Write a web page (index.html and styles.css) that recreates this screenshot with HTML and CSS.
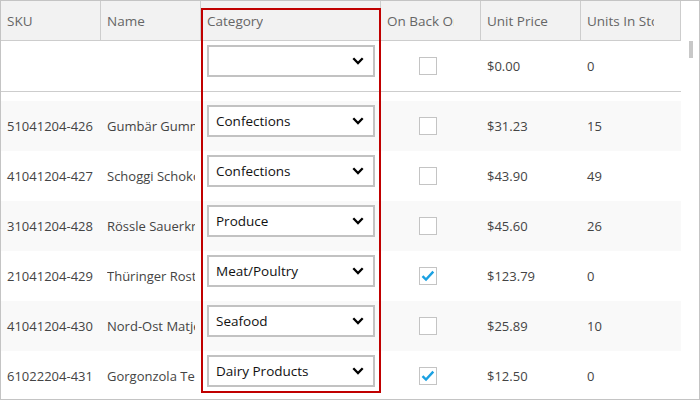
FILE: index.html
```html
<!DOCTYPE html>
<html>
<head>
<meta charset="utf-8">
<link rel="stylesheet" href="styles.css">
</head>
<body>
<div class="grid">
  <div class="table">
    <div class="header">
      <div class="hcell"><span class="label">SKU</span></div>
      <div class="hcell"><span class="label">Name</span></div>
      <div class="hcell"><span class="label">Category</span></div>
      <div class="hcell"><span class="label">On Back Order</span></div>
      <div class="hcell"><span class="label">Unit Price</span></div>
      <div class="hcell"><span class="label">Units In Stock</span></div>
    </div>
    <div class="row filter">
      <div class="cell"></div>
      <div class="cell"></div>
      <div class="cell combo-cell"><div class="combo"><span class="combo-text"></span><svg class="chev" width="12" height="8" viewBox="0 0 12 8"><path d="M1.3 1.3 L6 6 L10.7 1.3" fill="none" stroke="#000" stroke-width="2.3"/></svg></div></div>
      <div class="cell check-cell"><span class="box"></span></div>
      <div class="cell">$0.00</div>
      <div class="cell">0</div>
    </div>
    <div class="spacer"></div>
    <div class="row alt">
      <div class="cell">51041204-426</div>
      <div class="cell"><span class="name">Gumbär Gummibärchen</span></div>
      <div class="cell combo-cell"><div class="combo"><span class="combo-text">Confections</span><svg class="chev" width="12" height="8" viewBox="0 0 12 8"><path d="M1.3 1.3 L6 6 L10.7 1.3" fill="none" stroke="#000" stroke-width="2.3"/></svg></div></div>
      <div class="cell check-cell"><span class="box"></span></div>
      <div class="cell">$31.23</div>
      <div class="cell">15</div>
    </div>
    <div class="row">
      <div class="cell">41041204-427</div>
      <div class="cell"><span class="name">Schoggi Schokolade</span></div>
      <div class="cell combo-cell"><div class="combo"><span class="combo-text">Confections</span><svg class="chev" width="12" height="8" viewBox="0 0 12 8"><path d="M1.3 1.3 L6 6 L10.7 1.3" fill="none" stroke="#000" stroke-width="2.3"/></svg></div></div>
      <div class="cell check-cell"><span class="box"></span></div>
      <div class="cell">$43.90</div>
      <div class="cell">49</div>
    </div>
    <div class="row alt">
      <div class="cell">31041204-428</div>
      <div class="cell"><span class="name">Rössle Sauerkraut</span></div>
      <div class="cell combo-cell"><div class="combo"><span class="combo-text">Produce</span><svg class="chev" width="12" height="8" viewBox="0 0 12 8"><path d="M1.3 1.3 L6 6 L10.7 1.3" fill="none" stroke="#000" stroke-width="2.3"/></svg></div></div>
      <div class="cell check-cell"><span class="box"></span></div>
      <div class="cell">$45.60</div>
      <div class="cell">26</div>
    </div>
    <div class="row">
      <div class="cell">21041204-429</div>
      <div class="cell"><span class="name">Thüringer Rostbratwurst</span></div>
      <div class="cell combo-cell"><div class="combo"><span class="combo-text">Meat/Poultry</span><svg class="chev" width="12" height="8" viewBox="0 0 12 8"><path d="M1.3 1.3 L6 6 L10.7 1.3" fill="none" stroke="#000" stroke-width="2.3"/></svg></div></div>
      <div class="cell check-cell"><span class="box"><svg width="16" height="16" viewBox="0 0 16 16"><path d="M2.5 8.2 L6 11.6 L13.3 3.6" fill="none" stroke="#1ba1e2" stroke-width="2.4"/></svg></span></div>
      <div class="cell">$123.79</div>
      <div class="cell">0</div>
    </div>
    <div class="row alt">
      <div class="cell">41041204-430</div>
      <div class="cell"><span class="name">Nord-Ost Matjeshering</span></div>
      <div class="cell combo-cell"><div class="combo"><span class="combo-text">Seafood</span><svg class="chev" width="12" height="8" viewBox="0 0 12 8"><path d="M1.3 1.3 L6 6 L10.7 1.3" fill="none" stroke="#000" stroke-width="2.3"/></svg></div></div>
      <div class="cell check-cell"><span class="box"></span></div>
      <div class="cell">$25.89</div>
      <div class="cell">10</div>
    </div>
    <div class="row">
      <div class="cell">61022204-431</div>
      <div class="cell"><span class="name">Gorgonzola Telino</span></div>
      <div class="cell combo-cell"><div class="combo"><span class="combo-text">Dairy Products</span><svg class="chev" width="12" height="8" viewBox="0 0 12 8"><path d="M1.3 1.3 L6 6 L10.7 1.3" fill="none" stroke="#000" stroke-width="2.3"/></svg></div></div>
      <div class="cell check-cell"><span class="box"><svg width="16" height="16" viewBox="0 0 16 16"><path d="M2.5 8.2 L6 11.6 L13.3 3.6" fill="none" stroke="#1ba1e2" stroke-width="2.4"/></svg></span></div>
      <div class="cell">$12.50</div>
      <div class="cell">0</div>
    </div>
  </div>
  <div class="scrollbar"><div class="thumb"></div></div>
  <div class="highlight"></div>
</div>
</body>
</html>
```

FILE: styles.css
```css
html, body {
  margin: 0;
  padding: 0;
  background: #fff;
}
body {
  font-family: "Open Sans", "Noto Sans", sans-serif;
  font-size: 13px;
  color: #444;
}
.grid {
  position: relative;
  width: 700px;
  height: 400px;
  box-sizing: border-box;
  border: 1px solid #c4c4c4;
  display: flex;
  overflow: hidden;
}
.table {
  width: 680px;
  flex: none;
}
.header {
  display: grid;
  grid-template-columns: 100px 100px 180px 100px 100px 100px;
  height: 40px;
  box-sizing: border-box;
  background: #f2f2f2;
  border-bottom: 1px solid #cdcdcd;
}
.hcell {
  box-sizing: border-box;
  border-right: 1px solid #cdcdcd;
  padding: 0 6px;
  display: flex;
  align-items: center;
  min-width: 0;
  color: #666;
  font-size: 13.5px;
}
.label {
  display: block;
  max-width: 67px;
  white-space: nowrap;
  overflow: hidden;
}
.hcell:nth-child(3) .label {
  max-width: none;
}
.row {
  display: grid;
  grid-template-columns: 100px 100px 180px 100px 100px 100px;
  height: 50px;
}
.row.filter {
  border-bottom: 1px solid #cdcdcd;
}
.row.alt {
  background: #f9f9f9;
}
.spacer {
  height: 9px;
}
.cell {
  box-sizing: border-box;
  padding: 0 6px;
  display: flex;
  align-items: center;
  white-space: nowrap;
  min-width: 0;
}
.name {
  display: block;
  width: 90px;
  overflow: hidden;
  white-space: nowrap;
}
.combo-cell {
  align-items: flex-start;
  padding-top: 4px;
}
.combo {
  width: 168px;
  height: 32px;
  box-sizing: border-box;
  border: 2px solid #c2c2c2;
  background: #fff;
  display: flex;
  align-items: center;
  padding: 0 9px 0 7px;
}
.combo-text {
  flex: 1;
  color: #111;
  font-size: 13.5px;
}
.chev {
  display: block;
}
.check-cell {
  padding-left: 38px;
}
.box {
  width: 18px;
  height: 18px;
  box-sizing: border-box;
  border: 1px solid #c4c4c4;
  background: #fff;
  display: flex;
  align-items: center;
  justify-content: center;
}
.box svg {
  display: block;
}
.scrollbar {
  flex: 1;
  padding: 40px 0 0 8px;
}
.thumb {
  width: 4px;
  height: 17px;
  background: #c8c8c8;
}
.highlight {
  position: absolute;
  left: 200px;
  top: 7px;
  width: 180px;
  height: 385px;
  box-sizing: border-box;
  border: 2px solid #c00000;
  pointer-events: none;
}
```
